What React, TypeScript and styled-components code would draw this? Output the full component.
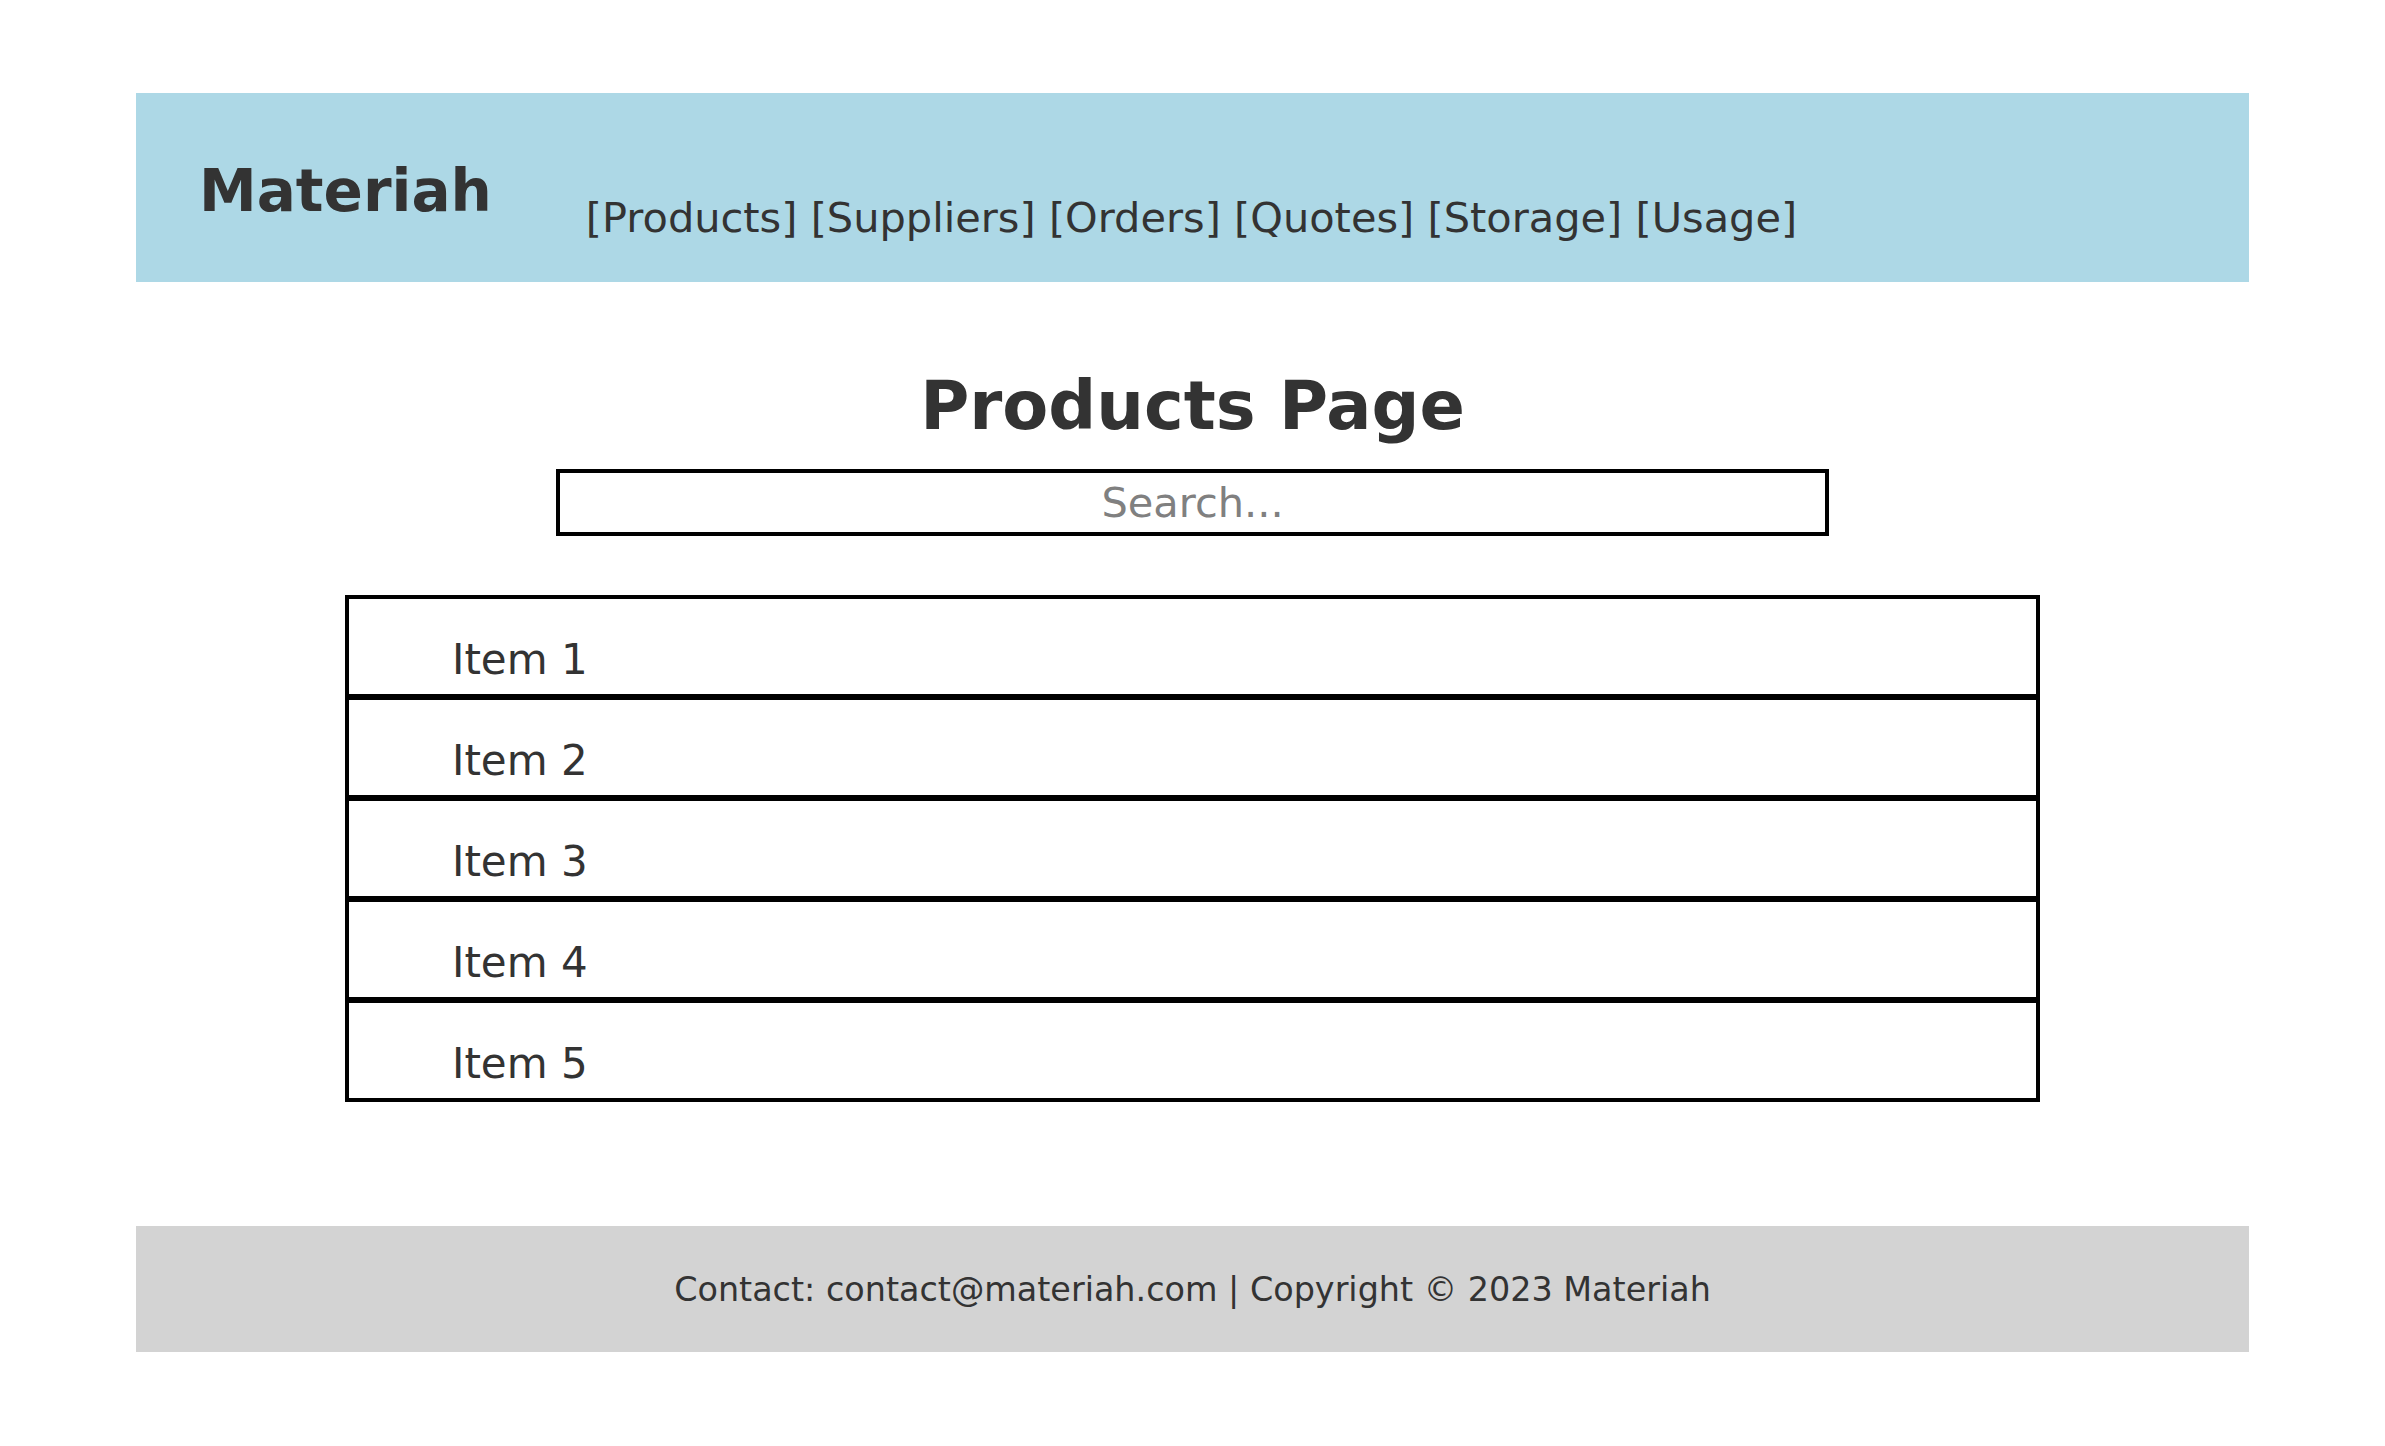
import React from 'react';
import styled, { createGlobalStyle } from 'styled-components';

const GlobalStyle = createGlobalStyle`
  html, body {
    margin: 0;
    padding: 0;
    background: #ffffff;
  }
  body {
    font-family: "DejaVu Sans", "Liberation Sans", sans-serif;
    color: #333333;
  }
`;

const Page = styled.div`
  padding: 93px 136px 0 136px;
  display: flex;
  flex-direction: column;
`;

const Header = styled.header`
  background: #add8e6;
  height: 189px;
  box-sizing: border-box;
  padding: 65px 0 0 63px;
  display: flex;
  align-items: flex-start;
`;

const Logo = styled.h1`
  margin: 0;
  font-size: 58px;
  font-weight: 700;
  line-height: 1.164;
  color: #333333;
`;

const Nav = styled.nav`
  margin: 36px 0 0 94px;
  font-size: 41.5px;
  line-height: 1.164;
  white-space: nowrap;
`;

const NavLink = styled.span`
  color: #333333;
`;

const Main = styled.main`
  display: flex;
  flex-direction: column;
  align-items: center;
  padding-top: 86px;
`;

const Title = styled.h2`
  margin: 0;
  font-size: 67px;
  font-weight: 700;
  line-height: 1.15;
  color: #333333;
`;

const Search = styled.input`
  margin-top: 24px;
  width: 1273px;
  height: 67px;
  box-sizing: border-box;
  border: 4px solid #000000;
  font-family: "DejaVu Sans", "Liberation Sans", sans-serif;
  font-size: 41.5px;
  text-align: center;
  color: #333333;
  background: #ffffff;
  padding: 0;
  outline: none;

  &::placeholder {
    color: #808080;
  }
`;

const List = styled.ul`
  list-style: none;
  margin: 59px 0 0 0;
  padding: 0;
  width: 1695px;
  box-sizing: border-box;
  border: 4px solid #000000;
`;

const Row = styled.li<{ last?: boolean }>`
  height: ${props => (props.last ? '95px' : '101px')};
  box-sizing: border-box;
  padding: 37px 0 0 104px;
  margin: 0 -1px;
  font-size: 42px;
  line-height: 1.164;
  color: #333333;
  border-bottom: ${props => (props.last ? 'none' : '6px solid #000000')};
`;

const Footer = styled.footer`
  margin-top: 124px;
  background: #d3d3d3;
  height: 126px;
  display: flex;
  align-items: center;
  justify-content: center;
  font-size: 33.4px;
  color: #333333;
`;

const navItems = ['Products', 'Suppliers', 'Orders', 'Quotes', 'Storage', 'Usage'];
const items = ['Item 1', 'Item 2', 'Item 3', 'Item 4', 'Item 5'];

export default function App() {
  return (
    <>
      <GlobalStyle />
      <Page>
        <Header>
          <Logo>Materiah</Logo>
          <Nav>
            {navItems.map((item, i) => (
              <React.Fragment key={item}>
                {i > 0 && ' '}
                <NavLink>[{item}]</NavLink>
              </React.Fragment>
            ))}
          </Nav>
        </Header>

        <Main>
          <Title>Products Page</Title>
          <Search type="text" placeholder="Search..." />
          <List>
            {items.map((item, i) => (
              <Row key={item} last={i === items.length - 1}>
                {item}
              </Row>
            ))}
          </List>
        </Main>

        <Footer>Contact: contact@materiah.com | Copyright © 2023 Materiah</Footer>
      </Page>
    </>
  );
}
